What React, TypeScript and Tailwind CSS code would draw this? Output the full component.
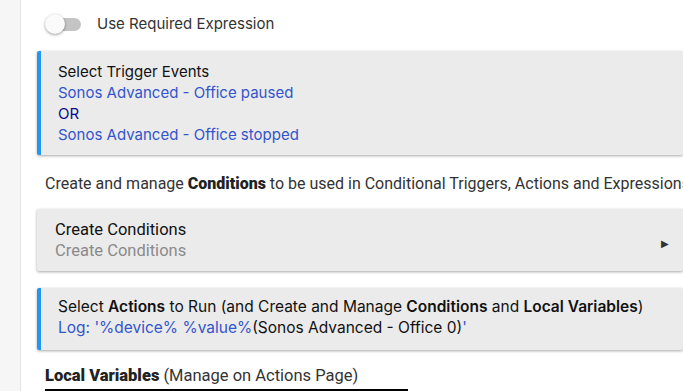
import React from 'react';

const Toggle: React.FC = () => (
  <div className="relative w-[36px] h-[20px] flex items-center">
    <div className="ml-[6px] w-[30px] h-[13px] rounded-full bg-[#c4c4c4]" />
    <div className="absolute left-0 top-0 w-[20px] h-[20px] rounded-full bg-[#fafafa] shadow-[0_1px_3px_rgba(0,0,0,0.4)]" />
  </div>
);

const App: React.FC = () => {
  return (
    <div className="w-[683px] h-[391px] overflow-hidden flex bg-white font-['Roboto',sans-serif]">
      {/* left gutter */}
      <div className="w-[21px] shrink-0 bg-[#f6f6f6] border-r border-[#e6e6e6]" />

      <div className="flex-1 min-w-0 pl-[16px] pt-[14px]">
        {/* Required expression */}
        <div className="flex items-center gap-[16px] pl-[8px] h-[20px]">
          <Toggle />
          <span className="font-['Inter',sans-serif] text-[15px] text-[#333]">Use Required Expression</span>
        </div>

        {/* Trigger events */}
        <div className="mt-[17px] bg-[#ebebeb] border-l-[4px] border-[#2196f3] rounded-[2px] shadow-[0_1px_3px_rgba(0,0,0,0.35)] py-[10px] pl-[17px] font-['Inter',sans-serif] text-[15px] leading-[21px] whitespace-nowrap">
          <div className="text-[#111]">Select Trigger Events</div>
          <div className="text-[#3355cc]">Sonos Advanced - Office paused</div>
          <div className="text-[#0a0a8c]">OR</div>
          <div className="text-[#3355cc]">Sonos Advanced - Office stopped</div>
        </div>

        <div className="mt-[18px] pl-[8px] text-[16px] leading-[21px] text-[#333] whitespace-nowrap">
          Create and manage <span className="font-black text-[#222]">Conditions</span> to be used in Conditional Triggers, Actions and Expressions
        </div>

        {/* Create conditions */}
        <div className="mt-[15px] bg-[#ebebeb] rounded-[2px] shadow-[0_1px_3px_rgba(0,0,0,0.35)] py-[10px] pl-[18px] pr-[14px] flex items-center text-[16.5px] leading-[21px] whitespace-nowrap">
          <div className="flex-1">
            <div className="text-[#111]">Create Conditions</div>
            <div className="text-[#8a8a8a]">Create Conditions</div>
          </div>
          <span className="mt-[6px] text-[10px] text-[#333]">▶</span>
        </div>

        {/* Actions */}
        <div className="mt-[17px] bg-[#ebebeb] border-l-[4px] border-[#2196f3] rounded-[2px] shadow-[0_1px_3px_rgba(0,0,0,0.35)] pt-[8px] pb-[12px] pl-[17px] font-['Inter',sans-serif] text-[15.5px] leading-[21px] whitespace-nowrap">
          <div className="text-[#111]">
            Select <span className="font-semibold">Actions</span> to Run (and Create and Manage <span className="font-semibold">Conditions</span> and <span className="font-semibold">Local Variables</span>)
          </div>
          <div className="text-[#3355cc]">
            Log: '%device% %value%<span className="text-[#111]">(Sonos Advanced - Office 0)</span>'
          </div>
        </div>

        <div className="mt-[15px] pl-[8px] text-[16.5px] leading-[21px] text-[#333] whitespace-nowrap">
          <span className="font-black text-[#222]">Local Variables</span> (Manage on Actions Page)
        </div>
        <div className="ml-[8px] mt-[3px] w-[363px] border-t-[2px] border-x-[2px] border-black h-[10px] flex">
          <div className="w-[118px] border-r border-[#999]" />
          <div className="w-[67px] border-r border-[#999]" />
        </div>
      </div>
    </div>
  );
};

export default App;
